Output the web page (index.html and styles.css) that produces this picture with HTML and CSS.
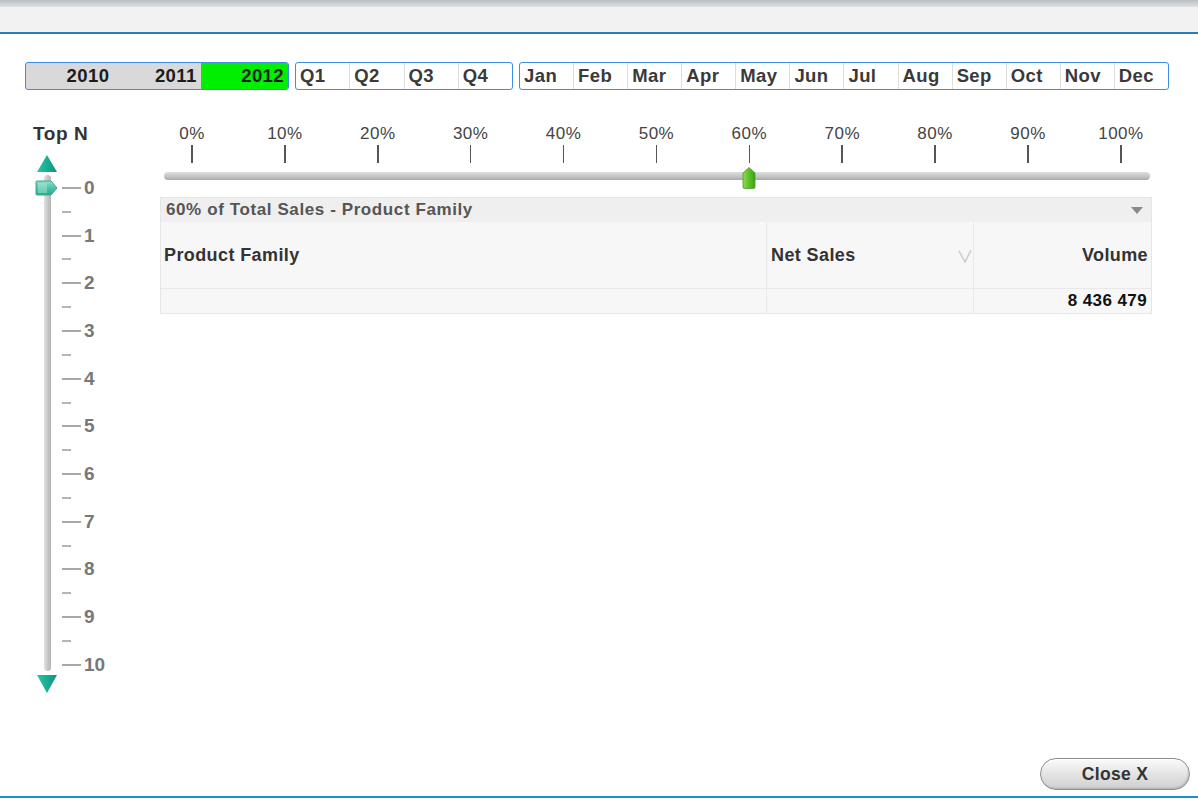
FILE: index.html
```html
<!DOCTYPE html>
<html>
<head>
<meta charset="utf-8">
<link rel="stylesheet" href="styles.css">
</head>
<body>
<div class="page">
  <div class="topbar"><div class="topbar-strip"></div></div>

  <div class="filters">
    <div class="lb years">
      <div class="yc">2010</div>
      <div class="yc">2011</div>
      <div class="yc sel">2012</div>
    </div>
    <div class="lb quarters">
      <div class="c">Q1</div><div class="c">Q2</div><div class="c">Q3</div><div class="c">Q4</div>
    </div>
    <div class="lb months">
      <div class="c">Jan</div><div class="c">Feb</div><div class="c">Mar</div><div class="c">Apr</div>
      <div class="c">May</div><div class="c">Jun</div><div class="c">Jul</div><div class="c">Aug</div>
      <div class="c">Sep</div><div class="c">Oct</div><div class="c">Nov</div><div class="c">Dec</div>
    </div>
  </div>

  <div class="main">
    <div class="left">
      <div class="topn">Top N</div>
      <div class="vslider">
        <div class="vrail">
          <svg class="arrow" width="20" height="17" viewBox="0 0 20 17">
            <defs>
              <linearGradient id="tg1" x1="0" y1="0" x2="1" y2="0">
                <stop offset="0" stop-color="#27c7a6"/>
                <stop offset="1" stop-color="#0b957c"/>
              </linearGradient>
            </defs>
            <polygon points="10,0 20,17 0,17" fill="url(#tg1)"/>
          </svg>
          <div class="vtrack"></div>
          <svg class="arrow down" width="20" height="18" viewBox="0 0 20 18">
            <defs>
              <linearGradient id="tg2" x1="0" y1="0" x2="1" y2="0">
                <stop offset="0" stop-color="#27c7a6"/>
                <stop offset="1" stop-color="#0b957c"/>
              </linearGradient>
            </defs>
            <polygon points="0,0 20,0 10,18" fill="url(#tg2)"/>
          </svg>
          <svg class="vthumb" width="24" height="16" viewBox="0 0 24 16">
            <defs>
              <linearGradient id="tg3" x1="0" y1="0" x2="0" y2="1">
                <stop offset="0" stop-color="#8ee0cc"/>
                <stop offset="0.5" stop-color="#4cc3a8"/>
                <stop offset="1" stop-color="#2aa88c"/>
              </linearGradient>
            </defs>
            <path d="M2,1 H16 L22,8 L16,15 H2 Q1,15 1,14 V2 Q1,1 2,1 Z" fill="url(#tg3)" stroke="#3aa98f" stroke-width="1"/>
            <rect x="3" y="3" width="9" height="10" fill="#b5eadd" opacity="0.45"/>
          </svg>
        </div>
        <div class="vscale">
          <div class="vrow major"><span class="tk"></span><span class="vl">0</span></div>
          <div class="vrow"><span class="tk minor"></span></div>
          <div class="vrow major"><span class="tk"></span><span class="vl">1</span></div>
          <div class="vrow"><span class="tk minor"></span></div>
          <div class="vrow major"><span class="tk"></span><span class="vl">2</span></div>
          <div class="vrow"><span class="tk minor"></span></div>
          <div class="vrow major"><span class="tk"></span><span class="vl">3</span></div>
          <div class="vrow"><span class="tk minor"></span></div>
          <div class="vrow major"><span class="tk"></span><span class="vl">4</span></div>
          <div class="vrow"><span class="tk minor"></span></div>
          <div class="vrow major"><span class="tk"></span><span class="vl">5</span></div>
          <div class="vrow"><span class="tk minor"></span></div>
          <div class="vrow major"><span class="tk"></span><span class="vl">6</span></div>
          <div class="vrow"><span class="tk minor"></span></div>
          <div class="vrow major"><span class="tk"></span><span class="vl">7</span></div>
          <div class="vrow"><span class="tk minor"></span></div>
          <div class="vrow major"><span class="tk"></span><span class="vl">8</span></div>
          <div class="vrow"><span class="tk minor"></span></div>
          <div class="vrow major"><span class="tk"></span><span class="vl">9</span></div>
          <div class="vrow"><span class="tk minor"></span></div>
          <div class="vrow major"><span class="tk"></span><span class="vl">10</span></div>
        </div>
      </div>
    </div>

    <div class="right">
      <div class="hslider">
        <div class="hscale">
          <div class="ht"><span class="hl">0%</span><span class="hk"></span></div>
          <div class="ht"><span class="hl">10%</span><span class="hk"></span></div>
          <div class="ht"><span class="hl">20%</span><span class="hk"></span></div>
          <div class="ht"><span class="hl">30%</span><span class="hk"></span></div>
          <div class="ht"><span class="hl">40%</span><span class="hk"></span></div>
          <div class="ht"><span class="hl">50%</span><span class="hk"></span></div>
          <div class="ht"><span class="hl">60%</span><span class="hk"></span></div>
          <div class="ht"><span class="hl">70%</span><span class="hk"></span></div>
          <div class="ht"><span class="hl">80%</span><span class="hk"></span></div>
          <div class="ht"><span class="hl">90%</span><span class="hk"></span></div>
          <div class="ht"><span class="hl">100%</span><span class="hk"></span></div>
        </div>
        <div class="htrack">
          <svg class="hthumb" width="14" height="22" viewBox="0 0 14 22">
            <defs>
              <linearGradient id="gg" x1="0" y1="0" x2="1" y2="0">
                <stop offset="0" stop-color="#8fdc4a"/>
                <stop offset="0.5" stop-color="#5cc12a"/>
                <stop offset="1" stop-color="#3f9f1a"/>
              </linearGradient>
            </defs>
            <path d="M7,0.5 L13,6 V20 Q13,21.5 11.5,21.5 H2.5 Q1,21.5 1,20 V6 Z" fill="url(#gg)" stroke="#4a9e22" stroke-width="0.8"/>
          </svg>
        </div>
      </div>

      <div class="tbl">
        <div class="ttl">
          <span>60% of Total Sales - Product Family</span>
          <svg width="12" height="7" viewBox="0 0 12 7"><polygon points="0,0 12,0 6,7" fill="#8a8a8a"/></svg>
        </div>
        <div class="trow head">
          <div class="cell c1">Product Family</div>
          <div class="cell c2">Net Sales
            <svg class="sort" width="14" height="14" viewBox="0 0 14 14"><polyline points="1,2 7,13 13,1" fill="none" stroke="#cfcfcf" stroke-width="1.6"/></svg>
          </div>
          <div class="cell c3">Volume</div>
        </div>
        <div class="trow data">
          <div class="cell c1"></div>
          <div class="cell c2"></div>
          <div class="cell c3">8 436 479</div>
        </div>
      </div>
    </div>
  </div>

  <div class="footer">
    <button class="close">Close X</button>
  </div>
  <div class="bottomline"></div>
</div>
</body>
</html>
```

FILE: styles.css
```css
* { box-sizing: border-box; }
html, body { margin: 0; padding: 0; background: #ffffff; }
body { font-family: "Liberation Sans", Arial, sans-serif; }

.page {
  width: 1198px;
  height: 799px;
  display: flex;
  flex-direction: column;
  overflow: hidden;
}

.topbar {
  height: 34px;
  background: #f2f2f2;
  border-bottom: 2px solid #2c7bb6;
  flex: none;
}
.topbar-strip {
  height: 7px;
  background: linear-gradient(#b9bdc2, #dfe1e3);
}

.filters {
  display: flex;
  gap: 6px;
  padding: 28px 0 0 25px;
  flex: none;
}
.lb {
  display: flex;
  height: 28px;
  border: 1px solid #3d8fe3;
  border-radius: 3px;
  overflow: hidden;
  font-weight: bold;
  font-size: 18.5px;
  letter-spacing: 0.4px;
}
.years { width: 264px; background: #d9d9d9; color: #1c1c1c; }
.yc {
  flex: 1;
  text-align: right;
  padding-right: 4px;
  line-height: 26px;
}
.yc.sel { background: #00ef00; }
.quarters { width: 218px; }
.months { width: 650px; }
.lb .c {
  flex: 1;
  padding-left: 4px;
  line-height: 26px;
  color: #3a3a3a;
  border-left: 1px solid #dedede;
  white-space: nowrap;
}
.lb .c:first-child { border-left: none; }

.main {
  display: flex;
  flex: 1;
  padding-top: 33px;
}
.left { width: 160px; flex: none; }
.topn {
  margin-left: 33px;
  font-weight: bold;
  font-size: 19px;
  letter-spacing: 0.6px;
  line-height: 21px;
  color: #333;
}
.vslider {
  display: flex;
  margin-left: 37px;
  margin-top: 11px;
}
.vrail {
  position: relative;
  width: 20px;
  display: flex;
  flex-direction: column;
  align-items: center;
}
.arrow { display: block; }
.vtrack {
  width: 7px;
  height: 496px;
  margin-top: 3px;
  border-radius: 4px;
  background: linear-gradient(90deg, #e2e2e2, #c4c4c4 60%, #b4b4b4);
}
.arrow.down { margin-top: 4px; }
.vthumb {
  position: absolute;
  top: 25px;
  left: -2px;
}
.vscale {
  margin-left: 5px;
  margin-top: 21px;
  display: grid;
  grid-template-rows: repeat(21, 23.85px);
}
.vrow {
  display: flex;
  align-items: center;
}
.tk {
  display: block;
  width: 19px;
  height: 2px;
  background: #a8a8a8;
}
.tk.minor { width: 9px; background: #b4b4b4; }
.vl {
  margin-left: 3px;
  font-weight: bold;
  font-size: 19px;
  line-height: 20px;
  color: #787878;
}

.right { width: 992px; flex: none; padding-top: 2px; }
.hslider { margin-left: 4px; width: 986px; }
.hscale {
  display: flex;
  justify-content: space-between;
  margin: 0 29px 0 28px;
}
.ht {
  width: 0;
  display: flex;
  flex-direction: column;
  align-items: center;
}
.hl {
  white-space: nowrap;
  font-size: 17px;
  letter-spacing: 0.5px;
  line-height: 18px;
  color: #444;
}
.hk {
  display: block;
  width: 1.5px;
  height: 18px;
  margin-top: 2px;
  background: #555;
}
.htrack {
  position: relative;
  height: 8px;
  margin-top: 9px;
  border-radius: 4px;
  background: linear-gradient(#dedede, #c2c2c2 60%, #a9a9a9);
}
.hthumb {
  position: absolute;
  left: 578px;
  top: -5px;
}

.tbl {
  margin-top: 17px;
  border: 1px solid #e6e6e6;
  background: #f7f7f7;
}
.ttl {
  height: 24px;
  background: #efefef;
  display: flex;
  align-items: center;
  justify-content: space-between;
  padding: 0 8px 0 5px;
  font-weight: bold;
  font-size: 17px;
  letter-spacing: 0.6px;
  color: #555;
}
.trow { display: flex; }
.head { height: 66px; }
.data { height: 25px; border-top: 1px solid #e9e9e9; }
.cell {
  display: flex;
  align-items: center;
  border-left: 1px solid #e9e9e9;
}
.cell.c1 { width: 605px; border-left: none; padding-left: 3px; }
.cell.c2 { width: 207px; padding-left: 4px; position: relative; }
.cell.c3 { flex: 1; justify-content: flex-end; padding-right: 3px; }
.head .cell {
  font-weight: bold;
  font-size: 18px;
  letter-spacing: 0.4px;
  color: #333;
}
.sort {
  position: absolute;
  right: 1px;
  top: 27px;
}
.data .cell.c3 {
  font-weight: bold;
  font-size: 17px;
  letter-spacing: 0.4px;
  color: #111;
  padding-right: 4px;
}

.footer {
  display: flex;
  justify-content: flex-end;
  padding: 0 8px 6px 0;
  flex: none;
}
.close {
  width: 150px;
  height: 32px;
  border-radius: 16px;
  border: 1px solid #8c8c8c;
  background: linear-gradient(#fbfbfb, #e6e6e6 45%, #cfcfcf 100%);
  box-shadow: inset 0 1px 0 #ffffff, inset -1px -1px 2px rgba(0,0,0,0.15);
  font-family: "Liberation Sans", Arial, sans-serif;
  font-weight: bold;
  font-size: 17.5px;
  letter-spacing: 0.3px;
  color: #333;
  padding: 0;
}
.bottomline {
  height: 2px;
  margin-bottom: 1px;
  background: #1e8bd2;
  flex: none;
}
```
